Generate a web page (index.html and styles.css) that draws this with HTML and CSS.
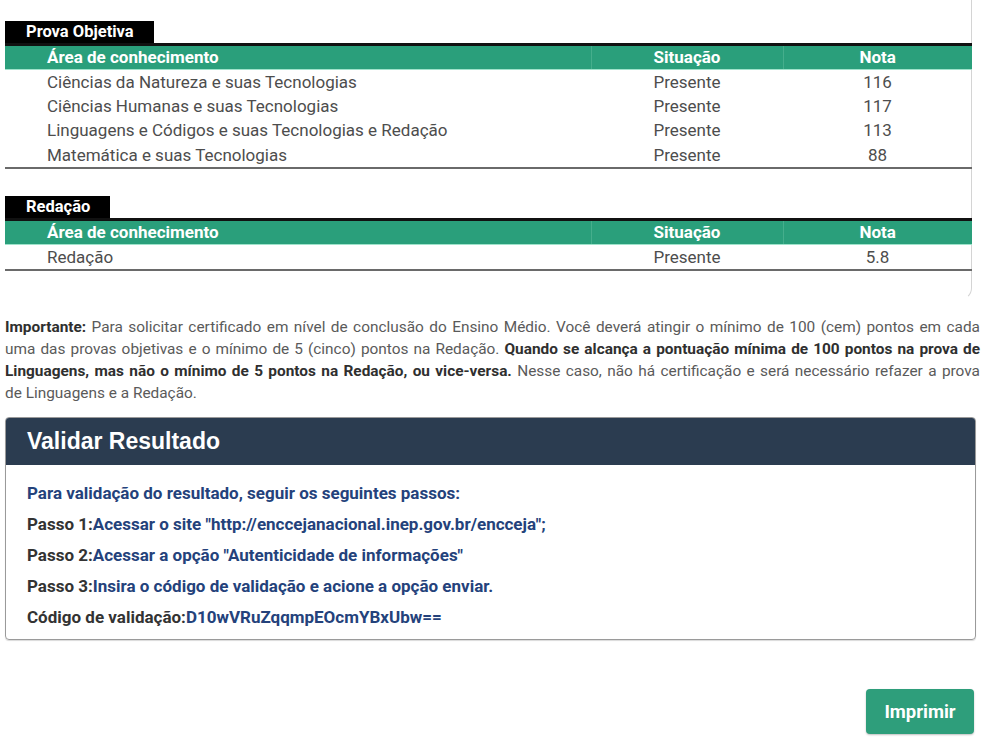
FILE: index.html
```html
<!DOCTYPE html>
<html lang="pt-BR">
<head>
<meta charset="utf-8">
<title>Resultado ENCCEJA</title>
<link rel="stylesheet" href="styles.css">
</head>
<body>
<div class="page">
  <div class="results">
    <section class="block">
      <div class="tab">Prova Objetiva</div>
      <table class="grid">
        <thead>
          <tr><th class="c-area">Área de conhecimento</th><th class="c-sit">Situação</th><th class="c-nota">Nota</th></tr>
        </thead>
        <tbody>
          <tr><td class="c-area">Ciências da Natureza e suas Tecnologias</td><td class="c-sit">Presente</td><td class="c-nota">116</td></tr>
          <tr><td class="c-area">Ciências Humanas e suas Tecnologias</td><td class="c-sit">Presente</td><td class="c-nota">117</td></tr>
          <tr><td class="c-area">Linguagens e Códigos e suas Tecnologias e Redação</td><td class="c-sit">Presente</td><td class="c-nota">113</td></tr>
          <tr><td class="c-area">Matemática e suas Tecnologias</td><td class="c-sit">Presente</td><td class="c-nota">88</td></tr>
        </tbody>
      </table>
    </section>
    <section class="block block-second">
      <div class="tab">Redação</div>
      <table class="grid">
        <thead>
          <tr><th class="c-area">Área de conhecimento</th><th class="c-sit">Situação</th><th class="c-nota">Nota</th></tr>
        </thead>
        <tbody>
          <tr><td class="c-area">Redação</td><td class="c-sit">Presente</td><td class="c-nota">5.8</td></tr>
        </tbody>
      </table>
    </section>
  </div>

  <p class="notice"><b>Importante:</b> Para solicitar certificado em nível de conclusão do Ensino Médio. Você deverá atingir o mínimo de 100 (cem) pontos em cada uma das provas objetivas e o mínimo de 5 (cinco) pontos na Redação. <b>Quando se alcança a pontuação mínima de 100 pontos na prova de Linguagens, mas não o mínimo de 5 pontos na Redação, ou vice-versa.</b> Nesse caso, não há certificação e será necessário refazer a prova de&nbsp;Linguagens e a Redação.</p>

  <div class="card">
    <div class="card-head">Validar Resultado</div>
    <div class="card-body">
      <p class="line blue">Para validação do resultado, seguir os seguintes passos:</p>
      <p class="line"><span class="lbl">Passo 1:</span><span class="blue">Acessar o site "http://enccejanacional.inep.gov.br/encceja";</span></p>
      <p class="line"><span class="lbl">Passo 2:</span><span class="blue">Acessar a opção "Autenticidade de informações"</span></p>
      <p class="line"><span class="lbl">Passo 3:</span><span class="blue">Insira o código de validação e acione a opção enviar.</span></p>
      <p class="line"><span class="lbl">Código de validação:</span><span class="blue">D10wVRuZqqmpEOcmYBxUbw==</span></p>
    </div>
  </div>

  <div class="actions">
    <button class="btn" type="button">Imprimir</button>
  </div>
</div>
</body>
</html>
```

FILE: styles.css
```css
* { box-sizing: border-box; }

html, body {
  margin: 0;
  padding: 0;
  background: #ffffff;
}

body {
  font-family: Roboto, "Noto Sans", "Liberation Sans", sans-serif;
  color: #4a4a4a;
  width: 984px;
  height: 749px;
  overflow: hidden;
}

.page {
  padding: 0 0 0 5px;
}

.results {
  width: 967px;
  height: 300px;
  padding-top: 21px;
  border-right: 1px solid #d4d4d4;
  border-bottom: 1px solid transparent;
  border-bottom-right-radius: 12px;
}

.block-second {
  margin-top: 27px;
}

.tab {
  display: inline-block;
  background: #000000;
  color: #ffffff;
  font-weight: 700;
  font-size: 16.5px;
  line-height: 22px;
  height: 22px;
  padding: 0 20px 0 21px;
  vertical-align: top;
}

.grid {
  width: 967px;
  border-collapse: collapse;
  border-top: 3px solid #111111;
  border-bottom: 2px solid #6a6a6a;
  table-layout: fixed;
}

.grid th {
  background: #2a9f7b;
  color: #ffffff;
  font-weight: 700;
  font-size: 17px;
  height: 24px;
  line-height: 23px;
  padding: 0;
  border-bottom: 1px solid #9fe3cb;
}

.grid th + th {
  border-left: 1px solid #45ae8c;
}

.grid td {
  font-size: 17px;
  color: #4d4d4d;
  height: 24.25px;
  line-height: 24px;
  padding: 0;
}

.c-area {
  width: 586px;
  text-align: left;
  padding-left: 42px !important;
}

.c-sit {
  width: 192px;
  text-align: center;
}

.c-nota {
  text-align: center;
}

.notice {
  margin: 16px 4px 0 0;
  font-size: 15.4px;
  line-height: 22px;
  color: #5a5a5a;
  text-align: justify;
}

.notice b {
  color: #2f2f2f;
}

.card {
  margin-top: 13px;
  width: 971px;
  border: 1px solid #9a9a9a;
  border-radius: 4px;
  overflow: hidden;
  box-shadow: 0 1px 1px rgba(0,0,0,0.15);
}

.card-head {
  background: #2b3c50;
  color: #ffffff;
  font-family: "Liberation Sans", Arial, sans-serif;
  font-weight: 700;
  font-size: 23px;
  height: 47px;
  line-height: 46px;
  padding-left: 21px;
}

.card-body {
  padding: 13px 0 6px 21px;
}

.line {
  margin: 0;
  font-size: 17px;
  font-weight: 700;
  line-height: 31px;
  height: 31px;
}

.lbl {
  color: #333333;
}

.blue {
  color: #24427b;
}

.actions {
  display: flex;
  justify-content: flex-end;
  padding: 49px 10px 0 0;
}

.btn {
  width: 108px;
  height: 45px;
  background: #2e9e7b;
  color: #ffffff;
  border: none;
  border-radius: 4px;
  font-family: Roboto, "Noto Sans", sans-serif;
  font-weight: 700;
  font-size: 18.5px;
  box-shadow: 0 1px 2px rgba(0,0,0,0.25);
}
```
